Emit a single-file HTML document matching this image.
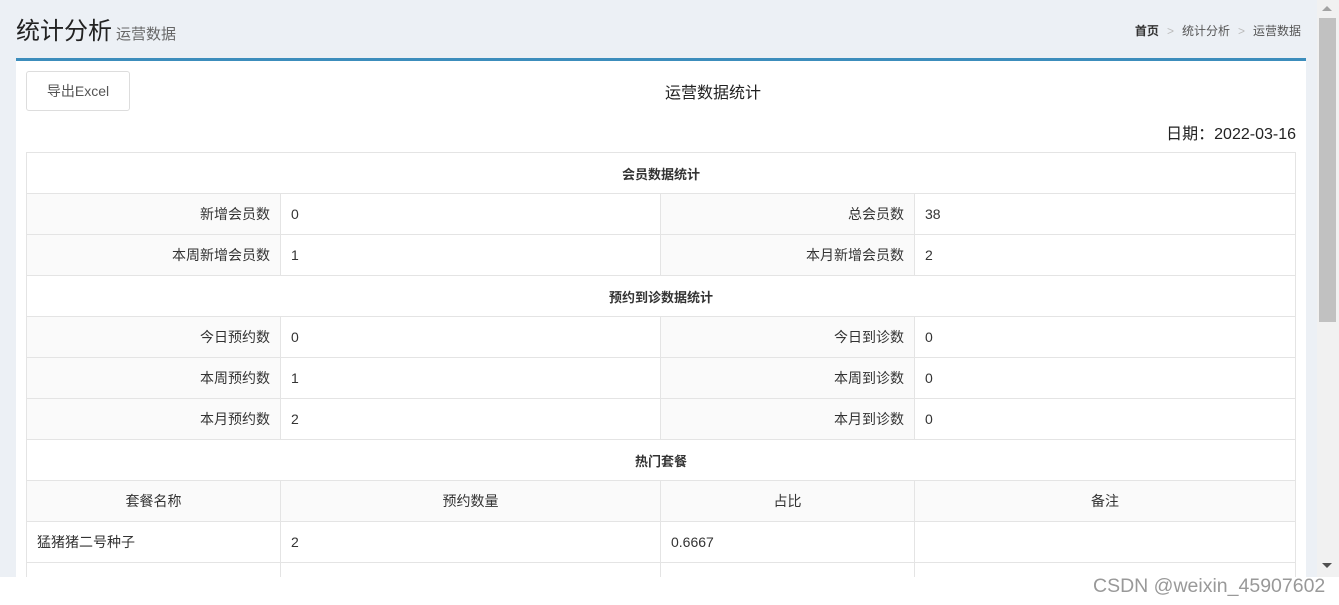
<!DOCTYPE html>
<html><head><meta charset="utf-8"><style>
*{margin:0;padding:0;box-sizing:border-box}
body{width:1339px;height:605px;overflow:hidden;background:#ecf0f5;font-family:"Liberation Sans","Noto Sans CJK SC",sans-serif;font-size:14px;color:#333;position:relative}
.abs{position:absolute}
h1{position:absolute;left:16px;top:11px;font-size:24px;font-weight:normal;color:#222}
h1 small{font-size:15px;color:#666;margin-left:4px}
.bc{position:absolute;right:38px;top:22px;font-size:12px;color:#555}
.bc b{color:#333}
.bc i{font-style:normal;color:#bbb;margin:0 8px}
.box{position:absolute;left:16px;top:58px;width:1290px;height:530px;background:#fff;border-top:3px solid #3c8dbc}
.btn{position:absolute;left:10px;top:10px;width:104px;height:40px;border:1px solid #ddd;border-radius:3px;text-align:center;line-height:38px;color:#555;font-size:14px}
.title{position:absolute;left:0;width:1394px;top:18px;text-align:center;font-size:16px;color:#222}
.date{position:absolute;right:10px;top:59px;font-size:16px;color:#222}
table{position:absolute;left:10px;top:91px;width:1269px;border-collapse:collapse;table-layout:fixed}
td{border:1px solid #e4e4e4;height:41px;padding:0 10px;font-size:14px}
.h{text-align:center;font-weight:bold;font-size:13px}
.l{background:#fafafa;text-align:right}
.g td{background:#fafafa;text-align:center}
.sb{position:absolute;left:1317px;top:0;width:22px;height:577px;background:#f1f1f1}
.thumb{position:absolute;left:1319px;top:18px;width:17px;height:304px;background:#c1c1c1}
.foot{position:absolute;left:0;top:577px;width:1339px;height:28px;background:#fff}
.wm{position:absolute;left:1093px;top:575px;font-size:19.5px;color:#999}
</style></head><body>
<h1>统计分析<small>运营数据</small></h1>
<div class="bc"><b>首页</b><i>&gt;</i>统计分析<i>&gt;</i>运营数据</div>
<div class="box">
<div class="btn">导出Excel</div>
<div class="title">运营数据统计</div>
<div class="date">日期：2022-03-16</div>
<table>
<colgroup><col style="width:254px"><col style="width:380px"><col style="width:254px"><col style="width:381px"></colgroup>
<tr><td colspan="4" class="h">会员数据统计</td></tr>
<tr><td class="l">新增会员数</td><td>0</td><td class="l">总会员数</td><td>38</td></tr>
<tr><td class="l">本周新增会员数</td><td>1</td><td class="l">本月新增会员数</td><td>2</td></tr>
<tr><td colspan="4" class="h">预约到诊数据统计</td></tr>
<tr><td class="l">今日预约数</td><td>0</td><td class="l">今日到诊数</td><td>0</td></tr>
<tr><td class="l">本周预约数</td><td>1</td><td class="l">本周到诊数</td><td>0</td></tr>
<tr><td class="l">本月预约数</td><td>2</td><td class="l">本月到诊数</td><td>0</td></tr>
<tr><td colspan="4" class="h">热门套餐</td></tr>
<tr class="g"><td>套餐名称</td><td>预约数量</td><td>占比</td><td>备注</td></tr>
<tr><td>猛猪猪二号种子</td><td>2</td><td>0.6667</td><td></td></tr>
<tr><td></td><td></td><td></td><td></td></tr>
</table>
</div>
<div class="sb"></div>
<div class="thumb"></div>
<div class="abs" style="left:1322px;top:6px;width:0;height:0;border-left:5px solid transparent;border-right:5px solid transparent;border-bottom:5px solid #a3a3a3"></div>
<div class="abs" style="left:1322px;top:563px;width:0;height:0;border-left:5px solid transparent;border-right:5px solid transparent;border-top:5px solid #505050"></div>
<div class="foot"></div>
<div class="wm">CSDN @weixin_45907602</div>
</body></html>
